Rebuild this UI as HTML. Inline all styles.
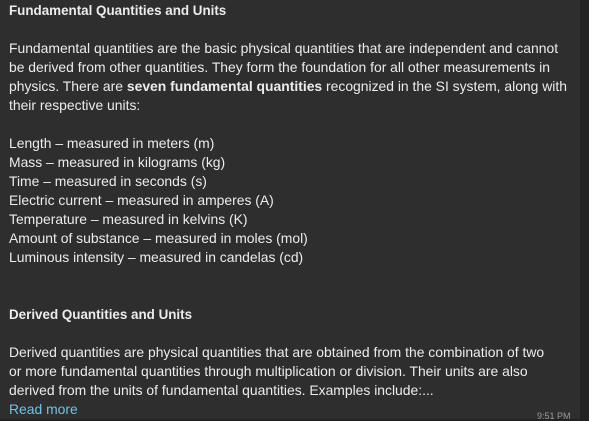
<!DOCTYPE html>
<html><head><meta charset="utf-8"><style>
html,body{margin:0;padding:0;width:589px;height:419px;overflow:hidden;background:#222;}
.b{position:absolute;left:0;top:0;width:580px;height:419px;background:#2e2e2e;}
.t{position:absolute;left:9px;top:1px;font-family:"Liberation Sans",sans-serif;font-size:13.9px;line-height:19px;color:#ececec;white-space:nowrap;}
.t div{height:19px;}
b{font-weight:bold;}
.h{font-size:13.4px;}
.rm{color:#6cc4ea;}
.time{position:absolute;left:537px;top:411px;font-family:"Liberation Sans",sans-serif;font-size:9px;color:#999;}
</style></head><body>
<div class="b"></div>
<div class="t">
<div class="h"><b>Fundamental Quantities and Units</b></div>
<div></div>
<div>Fundamental quantities are the basic physical quantities that are independent and cannot</div>
<div>be derived from other quantities. They form the foundation for all other measurements in</div>
<div>physics. There are <b>seven fundamental quantities</b> recognized in the SI system, along with</div>
<div>their respective units:</div>
<div></div>
<div>Length – measured in meters (m)</div>
<div>Mass – measured in kilograms (kg)</div>
<div>Time – measured in seconds (s)</div>
<div>Electric current – measured in amperes (A)</div>
<div>Temperature – measured in kelvins (K)</div>
<div>Amount of substance – measured in moles (mol)</div>
<div>Luminous intensity – measured in candelas (cd)</div>
<div></div>
<div></div>
<div class="h"><b>Derived Quantities and Units</b></div>
<div></div>
<div>Derived quantities are physical quantities that are obtained from the combination of two</div>
<div>or more fundamental quantities through multiplication or division. Their units are also</div>
<div>derived from the units of fundamental quantities. Examples include:...</div>
<div class="rm">Read more</div>
</div>
<div class="time">9:51 PM</div>
</body></html>
